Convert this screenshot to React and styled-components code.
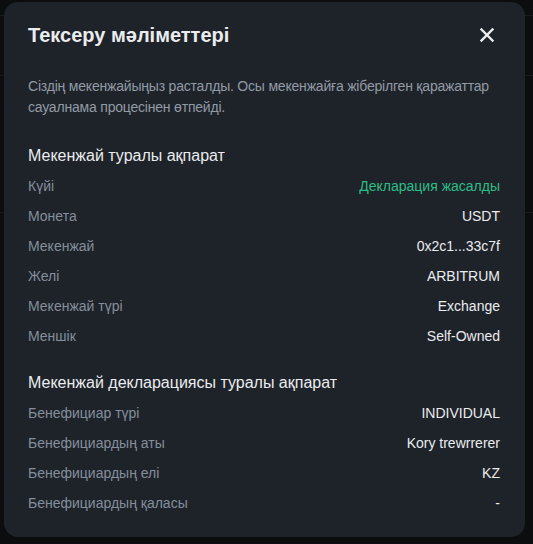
import React from "react";
import styled, { createGlobalStyle } from "styled-components";

const GlobalStyle = createGlobalStyle`
  html, body {
    margin: 0;
    padding: 0;
    background-color: #0c0d0f;
    background-image:
      linear-gradient(#1a1c20, #1a1c20),
      linear-gradient(#1a1c20, #1a1c20),
      linear-gradient(#1a1c20, #1a1c20);
    background-repeat: no-repeat;
    background-size: 100% 1px;
    background-position: 0 15px, 0 75px, 0 212px;
    font-family: "Liberation Sans", Arial, sans-serif;
  }
`;

const Page = styled.div`
  padding: 2px 8px 7px 4px;
  width: 521px;
`;

const Modal = styled.div`
  background: #1e2329;
  border-radius: 14px;
  padding: 19px 25px 19px 24px;
  color: #eaecef;
`;

const Header = styled.div`
  display: flex;
  align-items: center;
  justify-content: space-between;
  height: 28px;
`;

const Title = styled.h2`
  margin: 0;
  font-size: 20px;
  line-height: 28px;
  font-weight: 700;
  color: #eaecef;
`;

const CloseButton = styled.button`
  display: flex;
  align-items: center;
  justify-content: center;
  width: 24px;
  height: 24px;
  padding: 0;
  border: none;
  background: transparent;
  color: #eaecef;
  cursor: pointer;
  margin-right: 1px;
`;

const Description = styled.p`
  margin: 27px 0 26px;
  font-size: 14px;
  line-height: 21px;
  letter-spacing: -0.2px;
  color: #929aa5;
`;

const Section = styled.section`
  & + & {
    margin-top: 20px;
  }
`;

const SectionTitle = styled.h3`
  margin: 0 0 3px;
  font-size: 16px;
  line-height: 24px;
  font-weight: 500;
  color: #eaecef;
`;

const Row = styled.div`
  display: flex;
  align-items: center;
  justify-content: space-between;
  height: 30px;
  font-size: 14px;
`;

const Label = styled.span`
  color: #848e9c;
`;

const Value = styled.span`
  color: ${(p) => (p.$accent ? "#2ebd85" : "#eaecef")};
`;

function CloseIcon() {
  return (
    <svg width="16" height="16" viewBox="0 0 16 16" fill="none">
      <path
        d="M2.5 2.5L13.5 13.5M13.5 2.5L2.5 13.5"
        stroke="currentColor"
        strokeWidth="2.4"
        strokeLinecap="square"
      />
    </svg>
  );
}

const addressInfo = [
  { label: "Күйі", value: "Декларация жасалды", accent: true },
  { label: "Монета", value: "USDT" },
  { label: "Мекенжай", value: "0x2c1...33c7f" },
  { label: "Желі", value: "ARBITRUM" },
  { label: "Мекенжай түрі", value: "Exchange" },
  { label: "Меншік", value: "Self-Owned" },
];

const declarationInfo = [
  { label: "Бенефициар түрі", value: "INDIVIDUAL" },
  { label: "Бенефициардың аты", value: "Kory trewrrerer" },
  { label: "Бенефициардың елі", value: "KZ" },
  { label: "Бенефициардың қаласы", value: "-" },
];

function InfoSection({ title, rows }) {
  return (
    <Section>
      <SectionTitle>{title}</SectionTitle>
      {rows.map((r) => (
        <Row key={r.label}>
          <Label>{r.label}</Label>
          <Value $accent={r.accent}>{r.value}</Value>
        </Row>
      ))}
    </Section>
  );
}

function App() {
  return (
    <>
      <GlobalStyle />
      <Page>
        <Modal>
          <Header>
            <Title>Тексеру мәліметтері</Title>
            <CloseButton aria-label="close">
              <CloseIcon />
            </CloseButton>
          </Header>
          <Description>
            Сіздің мекенжайыңыз расталды. Осы мекенжайға жіберілген қаражаттар
            сауалнама процесінен өтпейді.
          </Description>
          <InfoSection title="Мекенжай туралы ақпарат" rows={addressInfo} />
          <InfoSection
            title="Мекенжай декларациясы туралы ақпарат"
            rows={declarationInfo}
          />
        </Modal>
      </Page>
    </>
  );
}

export default App;
